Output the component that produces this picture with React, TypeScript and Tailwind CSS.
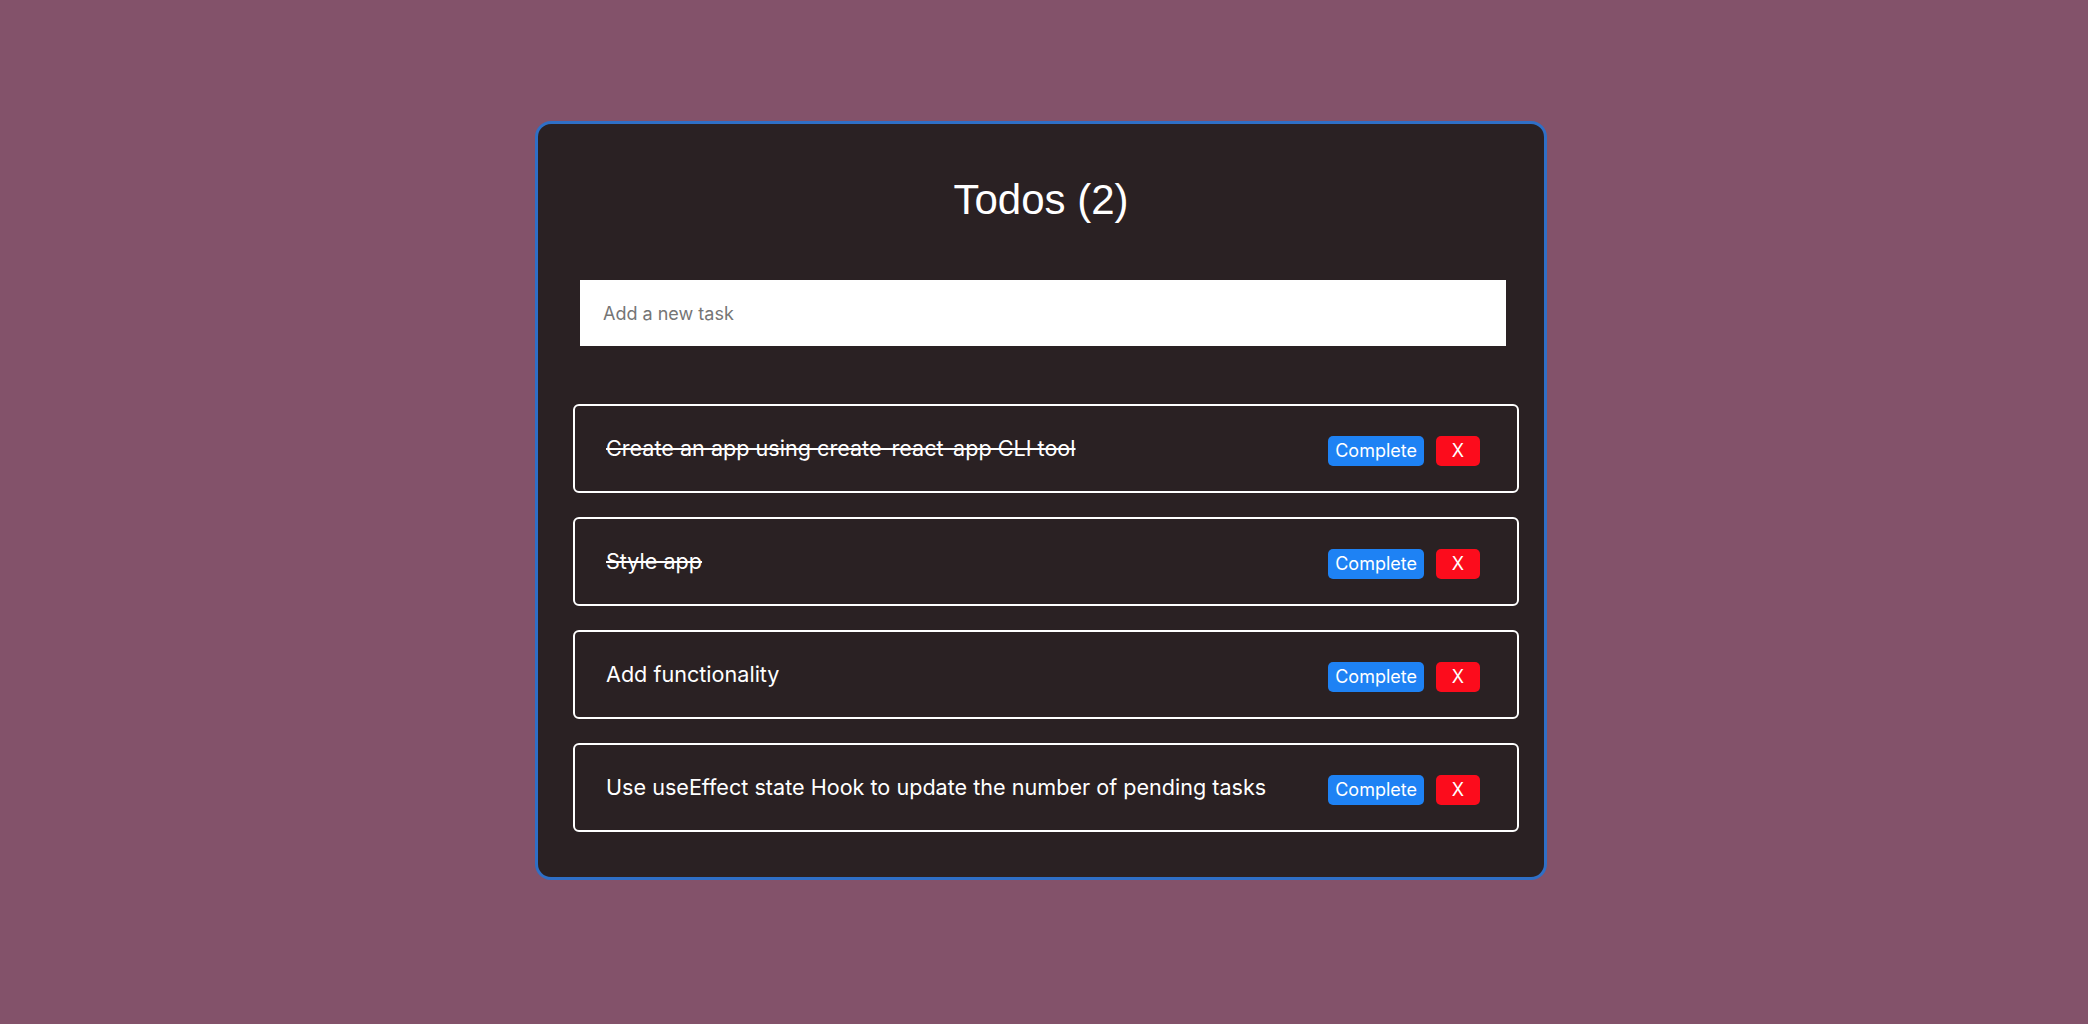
import React from "react";

type Todo = { text: string; done: boolean };

const todos: Todo[] = [
  { text: "Create an app using create-react-app CLI tool", done: true },
  { text: "Style app", done: true },
  { text: "Add functionality", done: false },
  { text: "Use useEffect state Hook to update the number of pending tasks", done: false },
];

function TodoRow({ todo }: { todo: Todo }) {
  return (
    <div className="flex h-[89px] items-center justify-between rounded-[6px] border-2 border-white pl-[31px] pr-[37px]">
      <span className={`text-[21.6px] text-white ${todo.done ? "line-through" : ""}`}>{todo.text}</span>
      <div className="flex items-center gap-[12px] pt-[4px]">
        <button className="h-[30px] rounded-[5px] bg-[#1e82f4] px-[7px] text-[18px] leading-none text-white">
          Complete
        </button>
        <button className="h-[30px] w-[44px] rounded-[5px] bg-[#fc0c1c] text-[18px] leading-none text-white">
          X
        </button>
      </div>
    </div>
  );
}

export default function App() {
  const pending = todos.filter((t) => !t.done).length;
  return (
    <div className="min-h-screen bg-[#83526a] pt-[121px] font-['Inter',sans-serif]">
      <div className="ml-[535px] flex h-[759px] w-[1012px] flex-col rounded-[16px] border-[3px] border-[#2f6fc6] bg-[#2a2123] pt-[50px]">
        <h1 className="text-center font-['Liberation_Sans',Arial,sans-serif] text-[42px] font-normal leading-[51px] text-white">
          Todos ({pending})
        </h1>

        <input
          className="ml-[42px] mt-[55px] h-[66px] w-[926px] bg-white px-[23px] text-[18px] text-black placeholder:text-[#757575] outline-none"
          placeholder="Add a new task"
        />

        <div className="ml-[35px] mt-[58px] flex w-[946px] flex-col gap-[24px]">
          {todos.map((todo, i) => (
            <TodoRow key={i} todo={todo} />
          ))}
        </div>
      </div>
    </div>
  );
}
